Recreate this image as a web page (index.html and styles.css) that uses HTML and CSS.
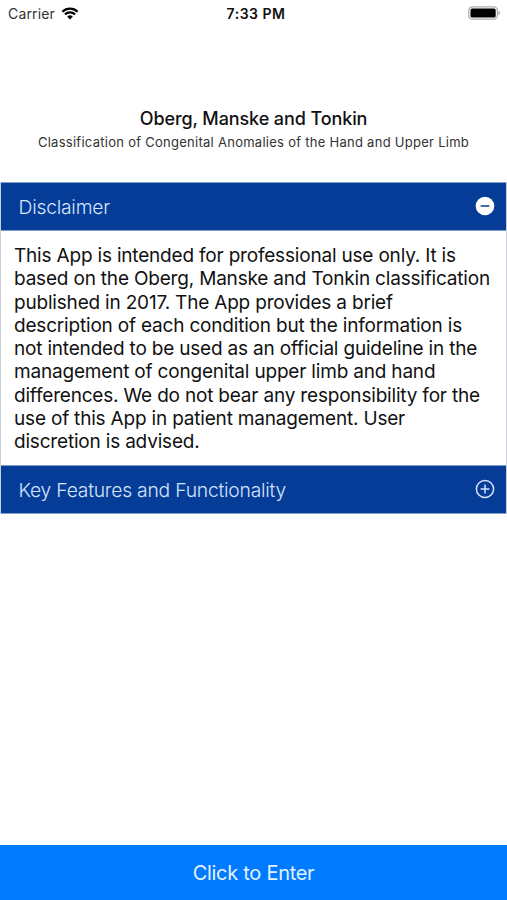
FILE: index.html
```html
<!DOCTYPE html>
<html lang="en">
<head>
    <meta charset="UTF-8">
    <meta name="viewport" content="width=device-width, initial-scale=1.0">
    <title>Oberg, Manske and Tonkin</title>
    <link rel="stylesheet" href="styles.css">
</head>
<body>
    <div class="status-bar">
        <div class="carrier">
            <span>Carrier</span>
            <svg class="wifi" viewBox="0 0 18 13" width="18" height="13">
                <path d="M1.4 4.8a10.8 10.8 0 0 1 15.2 0" />
                <path d="M4 7.4a7.1 7.1 0 0 1 10 0" />
                <path class="wifi-dot" d="M9 12.5 6.2 9.7a4 4 0 0 1 5.6 0z" />
            </svg>
        </div>
        <div class="time">7:33 PM</div>
        <div class="battery">
            <svg viewBox="0 0 33 14" width="33" height="14">
                <rect class="battery-shell" x="0.8" y="0.8" width="28.6" height="12.4" rx="3.6" />
                <rect x="2.5" y="2.5" width="25.2" height="9" rx="1.6" />
                <path class="battery-tip" d="M30.5 4.8c2 .7 2 3.7 0 4.4z" />
            </svg>
        </div>
    </div>

    <div class="header">
        <h1>Oberg, Manske and Tonkin</h1>
        <p>Classification of Congenital Anomalies of the Hand and Upper Limb</p>
    </div>

    <div class="accordion">
        <div class="accordion-header">
            <span>Disclaimer</span>
            <svg viewBox="0 0 20 20" width="20" height="20">
                <circle class="icon-fill" cx="10" cy="10" r="9.3" />
                <path class="icon-minus" d="M5.6 10h8.8" />
            </svg>
        </div>
        <div class="accordion-content">
            <p>
                This App is intended for professional use only. It is<br>
                based on the Oberg, Manske and Tonkin classification<br>
                published in 2017. The App provides a brief<br>
                description of each condition but the information is<br>
                not intended to be used as an official guideline in the<br>
                management of congenital upper limb and hand<br>
                differences. We do not bear any responsibility for the<br>
                use of this App in patient management. User<br>
                discretion is advised.
            </p>
        </div>
        <div class="accordion-header">
            <span>Key Features and Functionality</span>
            <svg viewBox="0 0 20 20" width="20" height="20">
                <circle class="icon-ring" cx="10" cy="10" r="8.6" />
                <path class="icon-plus" d="M5.6 10h8.8M10 5.6v8.8" />
            </svg>
        </div>
    </div>

    <button class="enter-button">Click to Enter</button>
</body>
</html>
```

FILE: styles.css
```css
* {
    box-sizing: border-box;
}

body {
    display: flex;
    flex-direction: column;
    height: 100vh;
    margin: 0;
    overflow: hidden;
    background-color: #fff;
    color: #111;
    font-family: Inter, Roboto, sans-serif;
    white-space: nowrap;
}

.status-bar {
    display: grid;
    grid-template-columns: 1fr auto 1fr;
    align-items: center;
    height: 27px;
    padding: 0 6px 0 8px;
    font-size: 14px;
}

.carrier {
    display: flex;
    align-items: center;
    gap: 6px;
    color: #333;
    letter-spacing: 0.15px;
}

.carrier svg {
    margin-bottom: 1px;
}

.wifi {
    fill: none;
    stroke: #000;
    stroke-width: 2.3;
}

.wifi-dot {
    fill: #000;
    stroke: none;
}

.time {
    padding-left: 3px;
    font-weight: 600;
    letter-spacing: 0.5px;
}

.battery {
    display: flex;
    justify-content: flex-end;
}

.battery svg {
    margin-bottom: 1px;
}

.battery-shell {
    fill: none;
    stroke: #aaa;
    stroke-width: 1.2;
}

.battery-tip {
    fill: #aaa;
}

.header {
    height: 155px;
    padding-top: 80px;
    text-align: center;
}

.header h1 {
    margin: 0;
    font-size: 18px;
    font-weight: 500;
    line-height: 24px;
    letter-spacing: -0.1px;
}

.header p {
    margin: 2px 0 0;
    color: #333;
    font-size: 13px;
    line-height: 18px;
    letter-spacing: 0.27px;
}

.accordion {
    border-left: 1px solid #ccd0d6;
    border-right: 1px solid #ccd0d6;
}

.accordion-header {
    display: flex;
    justify-content: space-between;
    align-items: center;
    height: 49px;
    padding: 0 11px 0 17.5px;
    border-top: 1px solid #7d9fce;
    border-bottom: 1px solid #7d9fce;
    background-color: #043c98;
    color: #d5e4fb;
    font-size: 19.3px;
    font-weight: 300;
    letter-spacing: -0.22px;
}

.accordion-header svg {
    margin-bottom: 2px;
}

.icon-fill {
    fill: #fff;
}

.icon-ring {
    fill: none;
    stroke: #d5e4fb;
    stroke-width: 1.5;
}

.icon-minus {
    stroke: #043c98;
    stroke-width: 1.5;
}

.icon-plus {
    stroke: #d5e4fb;
    stroke-width: 1.5;
}

.accordion-content {
    height: 234px;
    padding: 13px 0 0 13px;
}

.accordion-content p {
    margin: 0;
    font-size: 19px;
    line-height: 23.3px;
    letter-spacing: -0.19px;
}

.enter-button {
    height: 55px;
    margin-top: auto;
    border: none;
    background-color: #007aff;
    color: #e2f2ff;
    font-family: inherit;
    font-size: 20px;
    letter-spacing: -0.28px;
}
```
